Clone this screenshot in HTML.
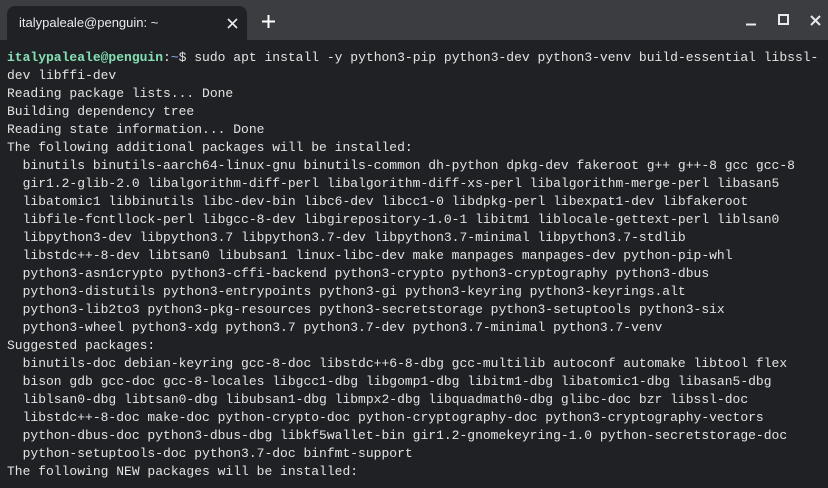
<!DOCTYPE html>
<html><head><meta charset="utf-8"><style>
html,body{margin:0;padding:0;width:828px;height:488px;overflow:hidden;background:#202124}
.bar{position:absolute;left:0;top:0;width:828px;height:40px;background:#3c3d41}
.tab{position:absolute;left:7px;top:6px;width:240px;height:34px;background:#202124;border-radius:8px 8px 0 0}
.tab span{position:absolute;left:12px;top:9px;font:13px "Liberation Sans",sans-serif;color:#e8eaed}
pre{position:absolute;left:7px;top:49px;margin:0;font:13px/18px "Liberation Mono","DejaVu Sans Mono",monospace;color:#e3e3e3;white-space:pre}
.g{color:#84e0b4;font-weight:bold}.b{color:#8ab4f8}
</style></head><body>
<div class="bar"></div>
<div class="tab"><span>italypaleale@penguin: ~</span>
<svg style="position:absolute;left:220px;top:12px" width="11" height="11"><path d="M1 1L10 10M10 1L1 10" stroke="#e8eaed" stroke-width="1.6"/></svg></div>
<svg style="position:absolute;left:262px;top:15px" width="13" height="13"><path d="M6.5 0V13M0 6.5H13" stroke="#fff" stroke-width="2"/></svg>
<svg style="position:absolute;left:745px;top:14px" width="76" height="14">
<path d="M1 10.5H11" stroke="#e8eaed" stroke-width="2"/>
<rect x="34" y="1" width="9" height="9" fill="none" stroke="#e8eaed" stroke-width="2"/>
<path d="M66 2L75 11M75 2L66 11" stroke="#e8eaed" stroke-width="2"/></svg>
<pre><span class="g">italypaleale@penguin</span>:<span class="b">~</span>$ sudo apt install -y python3-pip python3-dev python3-venv build-essential libssl-
dev libffi-dev
Reading package lists... Done
Building dependency tree
Reading state information... Done
The following additional packages will be installed:
  binutils binutils-aarch64-linux-gnu binutils-common dh-python dpkg-dev fakeroot g++ g++-8 gcc gcc-8
  gir1.2-glib-2.0 libalgorithm-diff-perl libalgorithm-diff-xs-perl libalgorithm-merge-perl libasan5
  libatomic1 libbinutils libc-dev-bin libc6-dev libcc1-0 libdpkg-perl libexpat1-dev libfakeroot
  libfile-fcntllock-perl libgcc-8-dev libgirepository-1.0-1 libitm1 liblocale-gettext-perl liblsan0
  libpython3-dev libpython3.7 libpython3.7-dev libpython3.7-minimal libpython3.7-stdlib
  libstdc++-8-dev libtsan0 libubsan1 linux-libc-dev make manpages manpages-dev python-pip-whl
  python3-asn1crypto python3-cffi-backend python3-crypto python3-cryptography python3-dbus
  python3-distutils python3-entrypoints python3-gi python3-keyring python3-keyrings.alt
  python3-lib2to3 python3-pkg-resources python3-secretstorage python3-setuptools python3-six
  python3-wheel python3-xdg python3.7 python3.7-dev python3.7-minimal python3.7-venv
Suggested packages:
  binutils-doc debian-keyring gcc-8-doc libstdc++6-8-dbg gcc-multilib autoconf automake libtool flex
  bison gdb gcc-doc gcc-8-locales libgcc1-dbg libgomp1-dbg libitm1-dbg libatomic1-dbg libasan5-dbg
  liblsan0-dbg libtsan0-dbg libubsan1-dbg libmpx2-dbg libquadmath0-dbg glibc-doc bzr libssl-doc
  libstdc++-8-doc make-doc python-crypto-doc python-cryptography-doc python3-cryptography-vectors
  python-dbus-doc python3-dbus-dbg libkf5wallet-bin gir1.2-gnomekeyring-1.0 python-secretstorage-doc
  python-setuptools-doc python3.7-doc binfmt-support
The following NEW packages will be installed:</pre>
</body></html>
